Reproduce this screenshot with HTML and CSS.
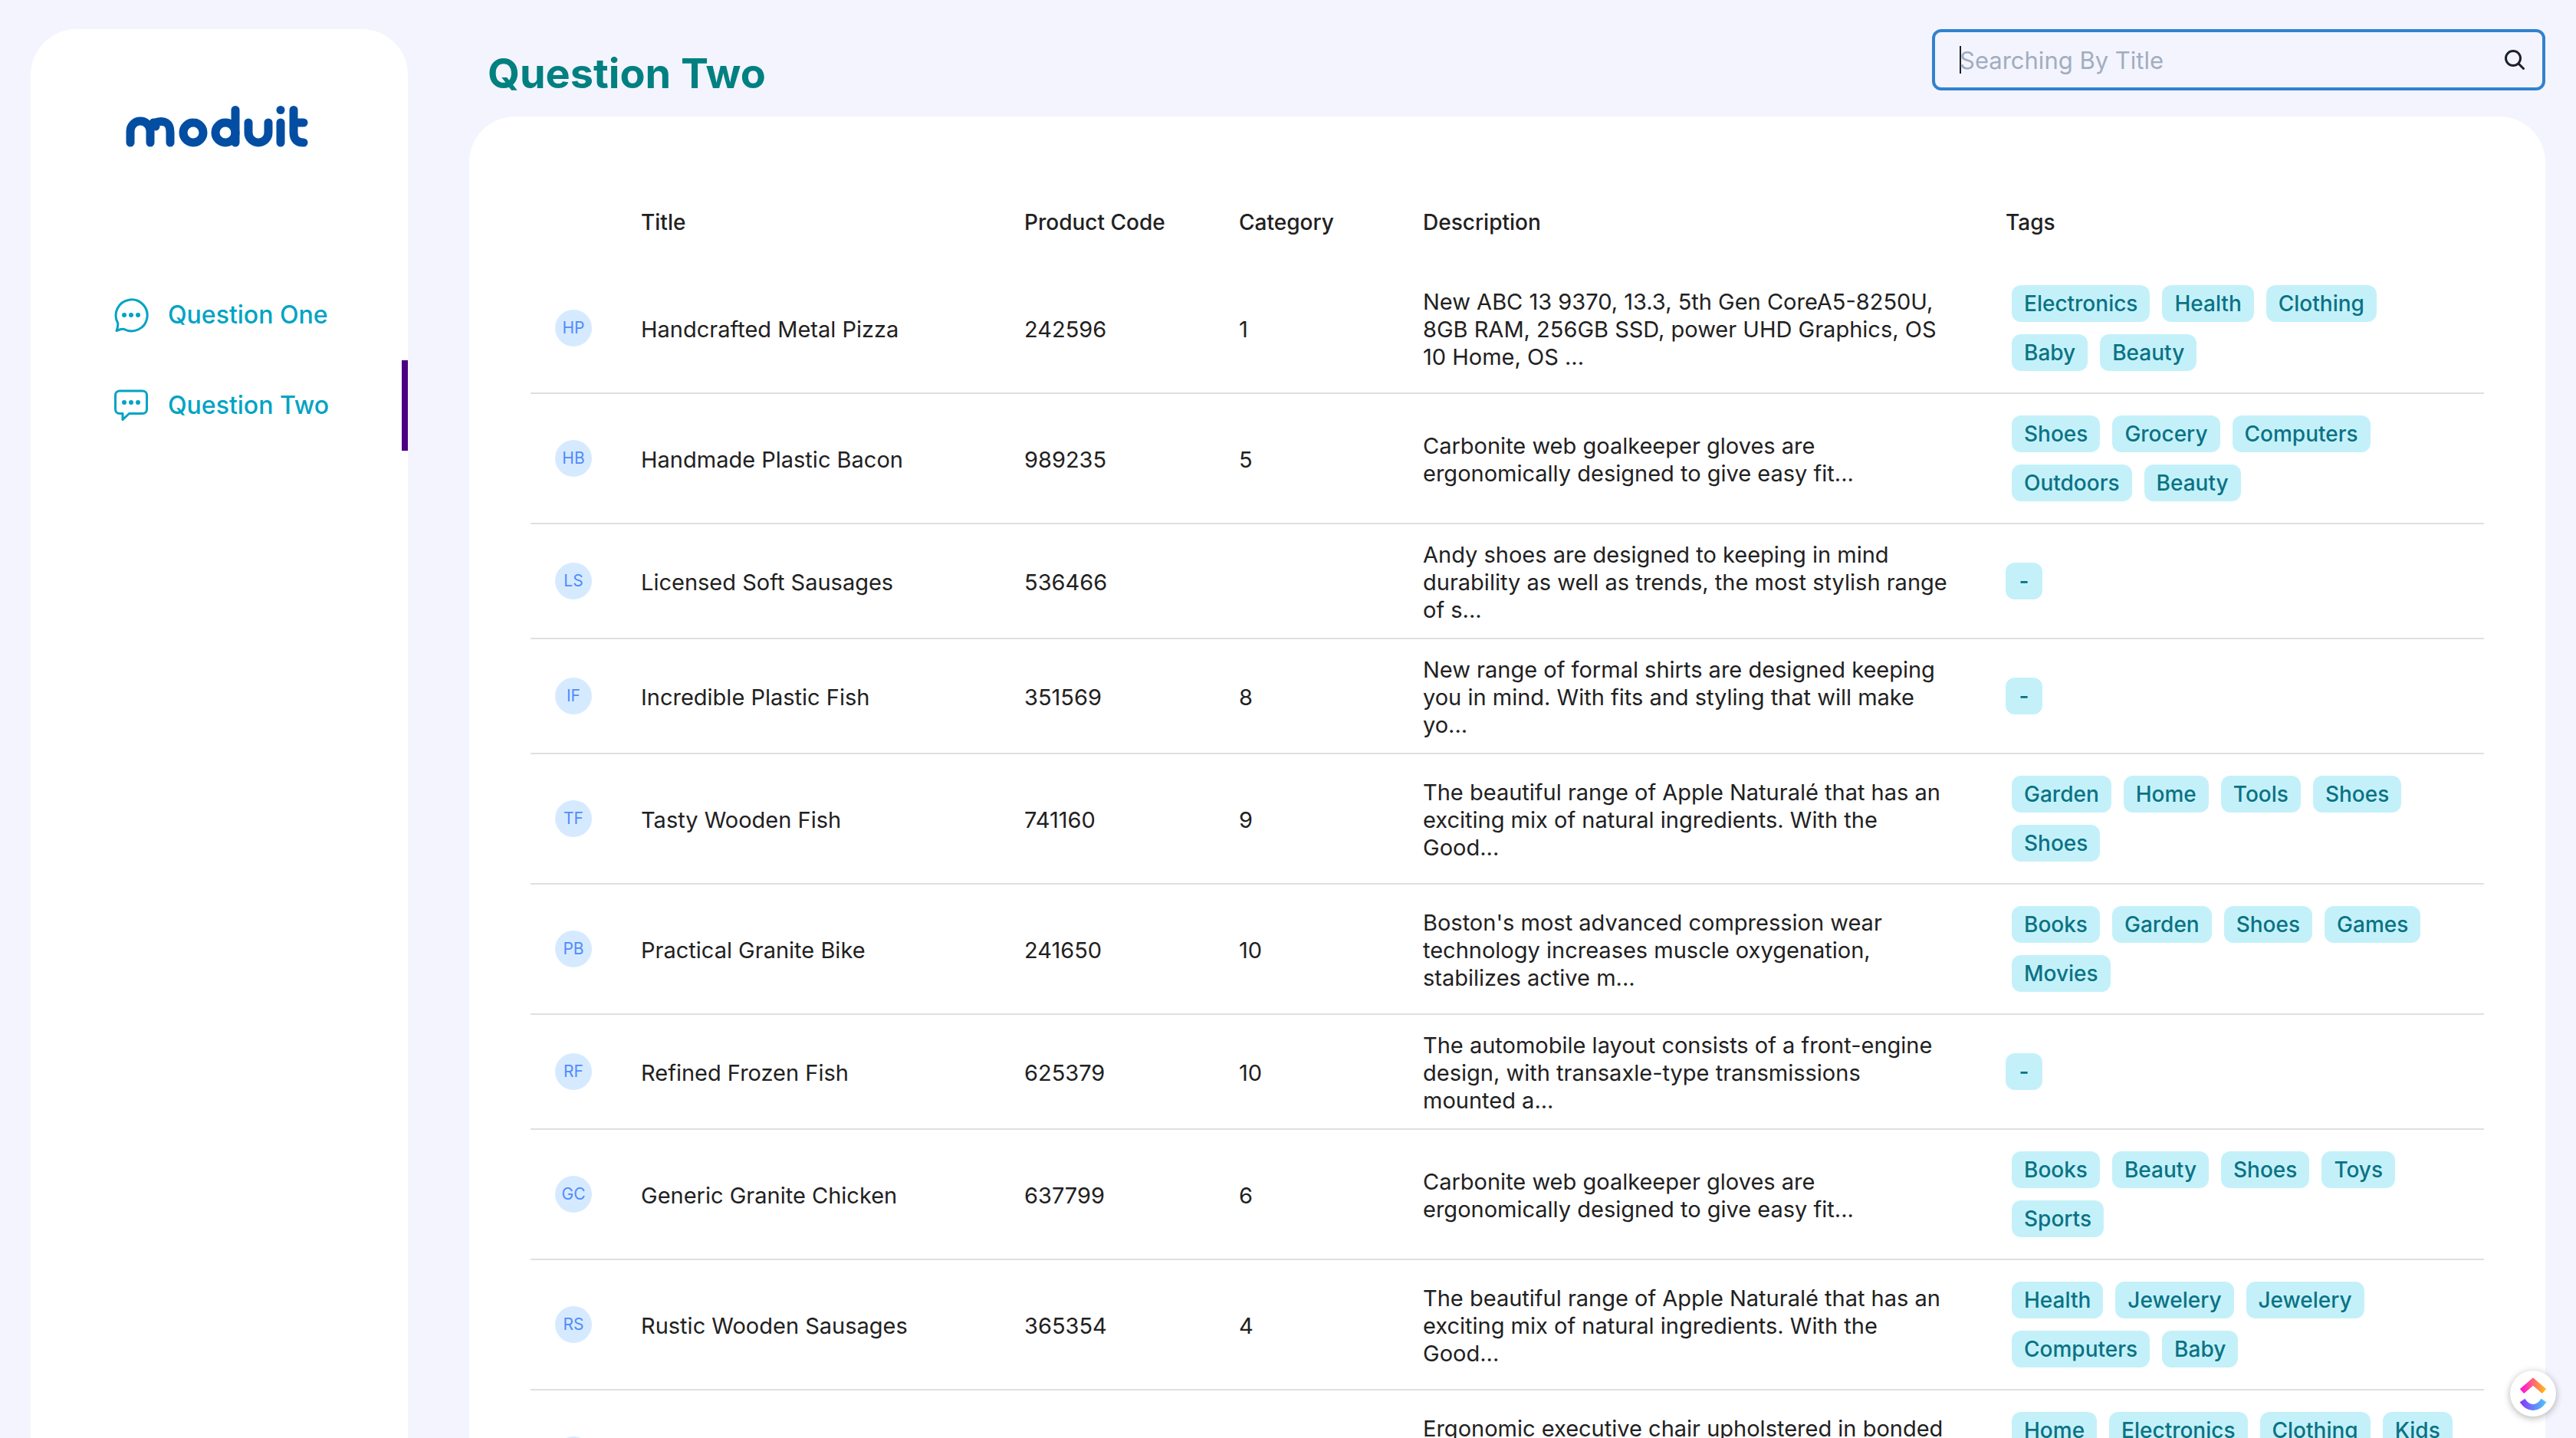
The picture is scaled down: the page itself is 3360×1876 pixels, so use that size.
FILE: index.html
```html
<!DOCTYPE html>
<html lang="en">
<head>
<meta charset="utf-8">
<title>Moduit</title>
<link rel="stylesheet" href="styles.css">
</head>
<body>
<div class="app">
  <aside class="sidebar">
    <svg class="logo" viewBox="0 0 240 56" role="img" aria-label="moduit" fill="none" stroke="#034ea2" stroke-width="11" stroke-linecap="round">
      <path d="M6 48V33a13 13 0 0 1 26 0V48"/>
      <path d="M38 22Q58 16 58 35V48M36 22l3 5" stroke-linecap="round"/>
      <circle cx="88" cy="35" r="13"/>
      <circle cx="130" cy="35" r="13"/>
      <path d="M143 5.500V48"/>
      <path d="M160 22V35a13 13 0 0 0 26 0V22"/>
      <path d="M202 22V48"/>
      <path d="M219 5.500V35q0 13 13 13M219 22h13"/>
      <circle cx="202" cy="5.500" r="5.500" fill="#034ea2" stroke="none"/>
    </svg>
    <nav class="nav">
      <a class="nav-link" href="#one">
        <svg class="nav-icon" viewBox="0 0 48 48" fill="none" stroke="currentColor" stroke-width="3" stroke-linejoin="round"><path d="M6.500 34A20.500 20.500 0 1 1 15 42.500Q12 41.500 5 44.500 7.500 38 6.500 34z"/><g fill="currentColor" stroke="none"><circle cx="15" cy="24" r="3"/><circle cx="24" cy="24" r="3"/><circle cx="33" cy="24" r="3"/></g></svg>
        <span>Question One</span>
      </a>
      <a class="nav-link nav-link-active" href="#two" aria-current="page">
        <svg class="nav-icon" viewBox="0 0 48 48" fill="none" stroke="currentColor" stroke-width="3" stroke-linejoin="round"><path d="M9 5h30a5.500 5.500 0 0 1 5.500 5.500v18.500a5.500 5.500 0 0 1-5.500 5.500H21.500l-8.500 8v-8H9a5.500 5.500 0 0 1-5.500-5.500V10.500A5.500 5.500 0 0 1 9 5z"/><g fill="currentColor" stroke="none"><circle cx="15" cy="20" r="3"/><circle cx="24" cy="20" r="3"/><circle cx="33" cy="20" r="3"/></g></svg>
        <span>Question Two</span>
      </a>
    </nav>
  </aside>
  <div class="content">
    <header class="topbar">
      <h1 class="page-title">Question Two</h1>
      <form class="search" role="search">
        <input class="search-input" type="text" placeholder="Searching By Title" aria-label="Searching By Title">
        <button class="search-button" type="submit" aria-label="Search">
          <svg class="search-icon" viewBox="0 0 28 28" fill="none" stroke="currentColor" stroke-width="3" stroke-linecap="round"><circle cx="12" cy="12" r="9.500"/><path d="M19 19l6.500 6.500"/></svg>
        </button>
      </form>
    </header>
    <main class="panel">
      <table class="products">
        <colgroup><col class="col-avatar"><col class="col-title"><col class="col-code"><col class="col-category"><col class="col-description"><col></colgroup>
        <thead>
          <tr><th></th><th scope="col">Title</th><th scope="col">Product Code</th><th scope="col">Category</th><th scope="col">Description</th><th scope="col">Tags</th></tr>
        </thead>
        <tbody>
          <tr><td><span class="avatar">HP</span></td><td>Handcrafted Metal Pizza</td><td>242596</td><td>1</td><td>New ABC 13 9370, 13.3, 5th Gen CoreA5-8250U, 8GB RAM, 256GB SSD, power UHD Graphics, OS 10 Home, OS ...</td><td><ul class="tags"><li class="tag">Electronics</li><li class="tag">Health</li><li class="tag">Clothing</li><li class="tag">Baby</li><li class="tag">Beauty</li></ul></td></tr>
          <tr><td><span class="avatar">HB</span></td><td>Handmade Plastic Bacon</td><td>989235</td><td>5</td><td>Carbonite web goalkeeper gloves are ergonomically designed to give easy fit...</td><td><ul class="tags"><li class="tag">Shoes</li><li class="tag">Grocery</li><li class="tag">Computers</li><li class="tag">Outdoors</li><li class="tag">Beauty</li></ul></td></tr>
          <tr><td><span class="avatar">LS</span></td><td>Licensed Soft Sausages</td><td>536466</td><td></td><td>Andy shoes are designed to keeping in mind durability as well as trends, the most stylish range of s...</td><td><span class="tag">-</span></td></tr>
          <tr><td><span class="avatar">IF</span></td><td>Incredible Plastic Fish</td><td>351569</td><td>8</td><td>New range of formal shirts are designed keeping you in mind. With fits and styling that will make yo...</td><td><span class="tag">-</span></td></tr>
          <tr><td><span class="avatar">TF</span></td><td>Tasty Wooden Fish</td><td>741160</td><td>9</td><td>The beautiful range of Apple Naturalé that has an exciting mix of natural ingredients. With the Good...</td><td><ul class="tags"><li class="tag">Garden</li><li class="tag">Home</li><li class="tag">Tools</li><li class="tag">Shoes</li><li class="tag">Shoes</li></ul></td></tr>
          <tr><td><span class="avatar">PB</span></td><td>Practical Granite Bike</td><td>241650</td><td>10</td><td>Boston's most advanced compression wear technology increases muscle oxygenation, stabilizes active m...</td><td><ul class="tags"><li class="tag">Books</li><li class="tag">Garden</li><li class="tag">Shoes</li><li class="tag">Games</li><li class="tag">Movies</li></ul></td></tr>
          <tr><td><span class="avatar">RF</span></td><td>Refined Frozen Fish</td><td>625379</td><td>10</td><td>The automobile layout consists of a front-engine design, with transaxle-type transmissions mounted a...</td><td><span class="tag">-</span></td></tr>
          <tr><td><span class="avatar">GC</span></td><td>Generic Granite Chicken</td><td>637799</td><td>6</td><td>Carbonite web goalkeeper gloves are ergonomically designed to give easy fit...</td><td><ul class="tags"><li class="tag">Books</li><li class="tag">Beauty</li><li class="tag">Shoes</li><li class="tag">Toys</li><li class="tag">Sports</li></ul></td></tr>
          <tr><td><span class="avatar">RS</span></td><td>Rustic Wooden Sausages</td><td>365354</td><td>4</td><td>The beautiful range of Apple Naturalé that has an exciting mix of natural ingredients. With the Good...</td><td><ul class="tags"><li class="tag">Health</li><li class="tag">Jewelery</li><li class="tag">Jewelery</li><li class="tag">Computers</li><li class="tag">Baby</li></ul></td></tr>
          <tr><td><span class="avatar"></span></td><td></td><td></td><td></td><td>Ergonomic executive chair upholstered in bonded black leather and PVC padded seat and back for all-d...</td><td><ul class="tags"><li class="tag">Home</li><li class="tag">Electronics</li><li class="tag">Clothing</li><li class="tag">Kids</li></ul></td></tr>
        </tbody>
      </table>
    </main>
  </div>
</div>
<button class="launcher" type="button" aria-label="Open ClickUp">
  <svg class="launcher-icon" viewBox="0 0 36 46" fill="none" stroke-width="8">
    <defs>
      <linearGradient id="warm" gradientUnits="userSpaceOnUse" x1="0" y1="0" x2="36" y2="0"><stop offset="0" stop-color="#ff02f0"/><stop offset="1" stop-color="#ffc800"/></linearGradient>
      <linearGradient id="cool" gradientUnits="userSpaceOnUse" x1="0" y1="0" x2="36" y2="0"><stop offset="0" stop-color="#8930fd"/><stop offset="1" stop-color="#49ccf9"/></linearGradient>
    </defs>
    <path d="M3.500 20L18 7.500 32.500 20" stroke="url(#warm)"/>
    <path d="M4 32q6 9 14 9t14-9" stroke="url(#cool)"/>
  </svg>
</button>
</body>
</html>
```
FILE: styles.css
```css
* { box-sizing: border-box; }

body {
  margin: 0;
  background: #f4f4fe;
  color: #212121;
  font-family: Inter, "Liberation Sans", sans-serif;
  font-size: 29px;
  line-height: 36px;
}

.app {
  display: flex;
  gap: 80px;
  height: 100vh;
  padding: 38px 40px 0;
  overflow: hidden;
}

.sidebar {
  flex: none;
  width: 492px;
  padding-top: 100px;
  background: #fff;
  border-radius: 60px 60px 0 0;
}

.logo {
  display: block;
  width: 240px;
  height: 56px;
  margin: 0 auto 158px 124px;
}

.nav-link {
  display: flex;
  align-items: center;
  gap: 24px;
  height: 118px;
  padding-left: 107px;
  border-right: 8px solid transparent;
  color: #00a3c4;
  font-size: 32px;
  font-weight: 500;
  text-decoration: none;
}

.nav-link-active { border-right-color: #4b0082; }

.nav-icon {
  width: 48px;
  height: 48px;
}

.content {
  display: flex;
  flex: 1;
  flex-direction: column;
  min-width: 0;
}

.topbar {
  display: flex;
  flex: none;
  justify-content: space-between;
  height: 114px;
  padding-left: 24px;
}

.page-title {
  margin: 24px 0 0;
  color: #008080;
  font-size: 54px;
  font-weight: 700;
  line-height: 68px;
}

.search {
  display: flex;
  align-items: center;
  width: 800px;
  height: 80px;
  border: 4px solid #3182ce;
  border-radius: 12px;
}

.search-input {
  flex: 1;
  height: 100%;
  padding: 0 0 0 32px;
  border: 0;
  outline: 0;
  background: linear-gradient(#1a202c, #1a202c) 32px center / 2px 36px no-repeat;
  color: #1a202c;
  font: inherit;
  font-size: 31px;
}

.search-input::placeholder { color: #a0aec0; opacity: 1; }

.search-button {
  display: grid;
  place-items: center;
  width: 72px;
  height: 72px;
  padding: 0;
  border: 0;
  background: none;
  color: #1a202c;
}

.search-icon {
  width: 28px;
  height: 28px;
}

.panel {
  flex: 1;
  min-height: 0;
  padding: 80px;
  background: #fff;
  border-radius: 60px 60px 0 0;
}

.products {
  width: 100%;
  table-layout: fixed;
  border-collapse: separate;
  border-spacing: 0;
}

.col-avatar { width: 112px; }
.col-title { width: 500px; }
.col-code { width: 280px; }
.col-category { width: 240px; }
.col-description { width: 760px; }

.products th {
  height: 112px;
  padding: 4px 32px 0;
  font-size: 28px;
  font-weight: 500;
  text-align: left;
}

.products td {
  padding: 22px 32px 18px;
  border-bottom: 2px solid #e0e0e0;
}

.products td:first-child,
.products td:last-child {
  padding: 20px 32px;
}

.avatar {
  display: grid;
  place-items: center;
  width: 48px;
  height: 48px;
  border-radius: 50%;
  background: #d6eaff;
  color: #4f8bff;
  font-size: 21px;
}

.tags {
  display: flex;
  flex-wrap: wrap;
  align-content: flex-start;
  gap: 16px;
  min-height: 128px;
  margin: 0;
  padding: 8px;
  list-style: none;
}

.tag {
  display: inline-block;
  min-width: 48px;
  padding: 0 16px;
  border-radius: 12px;
  background: #c4f1f9;
  color: #0b7285;
  font-size: 28px;
  font-weight: 500;
  line-height: 48px;
  text-align: center;
  vertical-align: middle;
}

.launcher {
  position: fixed;
  right: 26px;
  bottom: 28px;
  display: grid;
  place-items: center;
  width: 60px;
  height: 60px;
  padding: 0;
  border: 0;
  border-radius: 50%;
  background: #fff;
  box-shadow: 0 2px 10px rgba(0, 0, 0, 0.3);
}

.launcher-icon {
  width: 36px;
  height: 46px;
}
```
